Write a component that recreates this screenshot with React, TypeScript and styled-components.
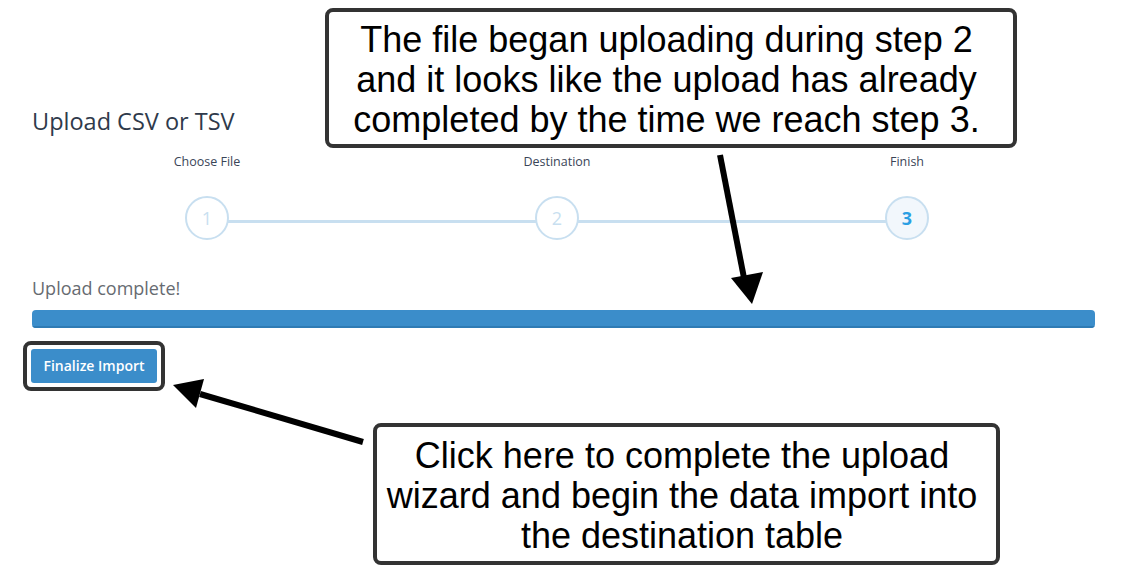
import styled, { createGlobalStyle } from 'styled-components';

const steps = ['Choose File', 'Destination', 'Finish'];
const current = 3;

function App() {
  return (
    <>
      <GlobalStyle />
      <Page>
        <Title>Upload CSV or TSV</Title>
        <Steps>
          {steps.map((label, i) => (
            <Step key={label} $last={i === steps.length - 1}>
              <StepLabel>{label}</StepLabel>
              <Circle $active={i + 1 === current}>{i + 1}</Circle>
            </Step>
          ))}
        </Steps>
        <Status>Upload complete!</Status>
        <Progress>
          <ProgressFill style={{ width: '100%' }} />
        </Progress>
        <Highlight>
          <Button>Finalize Import</Button>
        </Highlight>

        <Callout $top={8} $left={325} $width={692} $height={140}>
          The file began uploading during step 2
          <br />
          and it looks like the upload has already
          <br />
          completed by the time we reach step 3.
        </Callout>
        <Callout $top={423} $left={373} $width={627} $height={142}>
          Click here to complete the upload
          <br />
          wizard and begin the data import into
          <br />
          the destination table
        </Callout>

        <Arrows width="1144" height="583" viewBox="0 0 1144 583">
          <line x1="720" y1="155" x2="744" y2="278" stroke="#000" strokeWidth="6" />
          <polygon points="752,304 731,278 763,272" fill="#000" />
          <line x1="363" y1="442" x2="200" y2="394" stroke="#000" strokeWidth="6" />
          <polygon points="173,385 204,379 196,408" fill="#000" />
        </Arrows>
      </Page>
    </>
  );
}

const GlobalStyle = createGlobalStyle`
  body {
    margin: 0;
    background: #fff;
    font-family: "Open Sans", sans-serif;
  }
`;

const Page = styled.div`
  position: relative;
  width: 1144px;
  height: 583px;
  box-sizing: border-box;
  padding: 106px 49px 0 32px;
  overflow: hidden;
`;

const Title = styled.h1`
  margin: 0;
  font-size: 23.5px;
  line-height: 30px;
  font-weight: 400;
  color: #2f3a4b;
`;

const Steps = styled.div`
  display: grid;
  grid-template-columns: repeat(3, 350px);
  margin-top: 18px;
`;

const Step = styled.div<{ $last: boolean }>`
  position: relative;
  display: flex;
  flex-direction: column;
  align-items: center;

  &::after {
    content: '';
    display: ${p => (p.$last ? 'none' : 'block')};
    position: absolute;
    left: 50%;
    width: 350px;
    top: 66px;
    height: 3px;
    background: #c8dff0;
  }
`;

const StepLabel = styled.div`
  font-size: 12.5px;
  line-height: 16px;
  color: #3a4557;
`;

const Circle = styled.div<{ $active: boolean }>`
  position: relative;
  z-index: 1;
  margin-top: 26px;
  width: 44px;
  height: 44px;
  box-sizing: border-box;
  border-radius: 50%;
  border: 2px solid #c8dff0;
  background: ${p => (p.$active ? '#f2f7fc' : '#fff')};
  color: ${p => (p.$active ? '#2b9fe3' : '#c8dff0')};
  font-weight: ${p => (p.$active ? 700 : 400)};
  font-size: 18px;
  display: flex;
  align-items: center;
  justify-content: center;
`;

const Status = styled.div`
  margin-top: 36px;
  font-size: 18px;
  line-height: 24px;
  color: #676b71;
`;

const Progress = styled.div`
  margin-top: 10px;
  height: 18px;
  border-radius: 4px;
  background: #e8eef3;
  overflow: hidden;
`;

const ProgressFill = styled.div`
  height: 100%;
  box-sizing: border-box;
  background: #3b8dca;
  border-bottom: 2px solid #2f7bb4;
`;

const Highlight = styled.span`
  display: inline-block;
  margin: 13px 0 0 -9px;
  padding: 4px;
  border: 4px solid #333;
  border-radius: 8px;
`;

const Button = styled.button`
  display: block;
  width: 126px;
  height: 34px;
  padding: 0 0 1px;
  border: none;
  border-radius: 3px;
  background: #3b8dca;
  color: #fff;
  font-family: "Open Sans", sans-serif;
  font-size: 14px;
  font-weight: 600;
  cursor: pointer;
`;

const Callout = styled.div<{ $top: number; $left: number; $width: number; $height: number }>`
  position: absolute;
  top: ${p => p.$top}px;
  left: ${p => p.$left}px;
  width: ${p => p.$width}px;
  height: ${p => p.$height}px;
  box-sizing: border-box;
  padding: 4px 9px 0 0;
  border: 4px solid #333;
  border-radius: 8px;
  background: #fff;
  display: flex;
  align-items: center;
  justify-content: center;
  text-align: center;
  font-family: "Liberation Sans", Arial, sans-serif;
  font-size: 36px;
  line-height: 40px;
  color: #000;
`;

const Arrows = styled.svg`
  position: absolute;
  top: 0;
  left: 0;
  pointer-events: none;
`;

export default App;
